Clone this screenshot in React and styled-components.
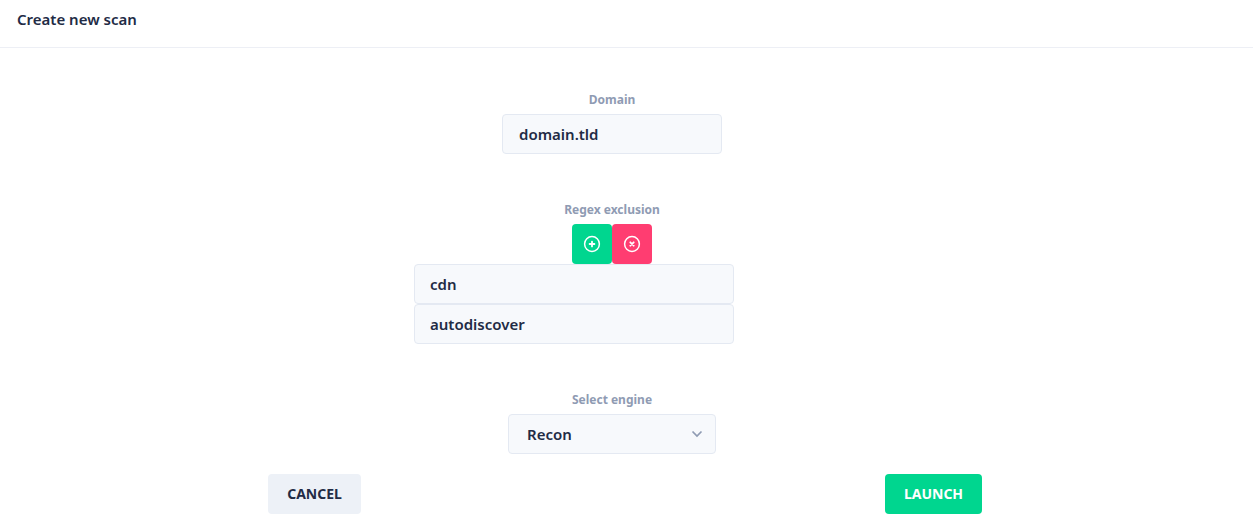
import React from "react";
import styled, { createGlobalStyle } from "styled-components";

const GlobalStyle = createGlobalStyle`
  html, body {
    margin: 0;
    padding: 0;
    background: #fff;
    font-family: "Noto Sans", "Open Sans", sans-serif;
    color: #1c2541;
  }
`;

const Page = styled.div`
  width: 1253px;
  height: 529px;
  overflow: hidden;
`;

const Header = styled.header`
  height: 47px;
  box-sizing: content-box;
  border-bottom: 1px solid #edeff5;
  padding-left: 17px;
  display: flex;
  align-items: center;
`;

const Title = styled.h1`
  margin: 0 0 10px;
  font-size: 15px;
  font-weight: 600;
  color: #222b45;
`;

const Form = styled.form`
  width: 714px;
  margin-left: 268px;
  padding-top: 45px;
`;

const Fields = styled.div`
  width: 688px;
  display: flex;
  flex-direction: column;
  align-items: center;
`;

const Group = styled.div`
  width: 100%;
  display: flex;
  flex-direction: column;
  align-items: center;
  margin-bottom: ${(p) => p.$gap || 0}px;
`;

const Label = styled.label`
  height: 14px;
  line-height: 14px;
  margin-bottom: 7px;
  font-size: 12px;
  font-weight: 700;
  color: #8f9bb3;
`;

const Box = styled.div`
  box-sizing: border-box;
  height: 40px;
  width: ${(p) => p.$width}px;
  padding: 0 ${(p) => p.$padRight || 15}px 0 ${(p) => p.$padLeft || 15}px;
  display: flex;
  align-items: center;
  justify-content: space-between;
  background: #f7f9fc;
  border: 1px solid #e4e9f2;
  border-radius: 4px;
  font-size: 15px;
  font-weight: 600;
  color: #222b45;
`;

const IconRow = styled.div`
  display: flex;
`;

const IconButton = styled.button`
  width: 40px;
  height: 40px;
  padding: 0;
  border: 0;
  border-radius: 4px;
  display: flex;
  align-items: center;
  justify-content: center;
  background: ${(p) => p.$color};
`;

const ExclusionList = styled.div`
  align-self: flex-start;
  margin-left: 146px;
`;

const Actions = styled.div`
  display: flex;
  justify-content: space-between;
`;

const ActionButton = styled.button`
  box-sizing: border-box;
  height: 40px;
  width: ${(p) => p.$width}px;
  padding: 0 0 2px;
  border: 0;
  border-radius: 4px;
  font-family: inherit;
  font-size: 14px;
  font-weight: 700;
  background: ${(p) => p.$bg};
  color: ${(p) => p.$fg};
`;

const Glyph = styled.svg`
  width: 18px;
  height: 18px;
  fill: none;
  stroke: #fff;
  stroke-linecap: round;
`;

const Ring = styled.circle`
  stroke-width: 1.5;
`;

const Mark = styled.path`
  stroke-width: 1.8;
`;

const PlusCircle = () => (
  <Glyph viewBox="0 0 18 18">
    <Ring cx="9" cy="9" r="7.4" />
    <Mark d="M9 6.6v4.8M6.6 9h4.8" />
  </Glyph>
);

const CrossCircle = () => (
  <Glyph viewBox="0 0 18 18">
    <Ring cx="9" cy="9" r="7.4" />
    <Mark d="M7.3 7.3l3.4 3.4M10.7 7.3l-3.4 3.4" />
  </Glyph>
);

const Chevron = styled.svg`
  width: 12px;
  height: 8px;
  fill: none;
  stroke: #8f9bb3;
  stroke-width: 1.7;
`;

export default function App() {
  return (
    <Page>
      <GlobalStyle />
      <Header>
        <Title>Create new scan</Title>
      </Header>
      <Form>
        <Fields>
          <Group $gap={49}>
            <Label>Domain</Label>
            <Box $width={220} $padLeft={16}>domain.tld</Box>
          </Group>
          <Group $gap={49}>
            <Label>Regex exclusion</Label>
            <IconRow>
              <IconButton type="button" $color="#00d68f">
                <PlusCircle />
              </IconButton>
              <IconButton type="button" $color="#ff3d71">
                <CrossCircle />
              </IconButton>
            </IconRow>
            <ExclusionList>
              <Box $width={320}>cdn</Box>
              <Box $width={320}>autodiscover</Box>
            </ExclusionList>
          </Group>
          <Group $gap={20}>
            <Label>Select engine</Label>
            <Box $width={208} $padLeft={18} $padRight={12}>
              Recon
              <Chevron viewBox="0 0 12 8">
                <path d="M1.5 1.5L6 6l4.5-4.5" />
              </Chevron>
            </Box>
          </Group>
        </Fields>
        <Actions>
          <ActionButton type="button" $width={93} $bg="#edf1f7" $fg="#222b45">
            CANCEL
          </ActionButton>
          <ActionButton type="button" $width={97} $bg="#00d68f" $fg="#fff">
            LAUNCH
          </ActionButton>
        </Actions>
      </Form>
    </Page>
  );
}
